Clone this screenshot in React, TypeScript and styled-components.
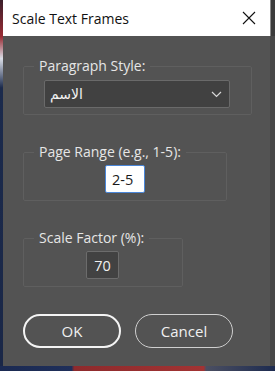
import React from 'react'
import styled, { createGlobalStyle } from 'styled-components'

const Global = createGlobalStyle`
  html, body {
    margin: 0;
    padding: 0;
    width: 275px;
    height: 371px;
    overflow: hidden;
    background: #16223f;
  }
  * {
    box-sizing: border-box;
  }
`

const Backdrop = styled.div`
  width: 275px;
  height: 371px;
  display: flex;
  flex-direction: column;
  font-family: 'Open Sans', 'Noto Sans', sans-serif;
`

const Main = styled.div`
  display: flex;
  height: 366px;
`

const LeftEdge = styled.div`
  width: 3px;
  background: linear-gradient(
    180deg,
    #3a1f2a 0%,
    #9a2c34 10%,
    #d9dde6 16%,
    #1b2a4c 24%,
    #1a2747 100%
  );
`

const RightEdge = styled.div`
  width: 5px;
  display: flex;
  flex-direction: column;
  &::before {
    content: '';
    height: 36px;
    background: #3b3b3b;
    border-left: 1px solid #8a8a8a;
  }
  &::after {
    content: '';
    flex: 1;
    background: #484848;
  }
`

const Dialog = styled.div`
  width: 267px;
  display: flex;
  flex-direction: column;
  background: #535353;
`

const TitleBar = styled.div`
  height: 36px;
  background: #ffffff;
  display: flex;
  align-items: center;
  justify-content: space-between;
  padding: 0 13px 0 9px;
  color: #111;
  font-size: 14px;
`

const CloseButton = styled.button`
  width: 16px;
  height: 16px;
  padding: 0;
  border: 0;
  background: transparent;
  display: flex;
  align-items: center;
  justify-content: center;
`

const Body = styled.div`
  display: flex;
  flex-direction: column;
  padding: 22px 0 0 20px;
`

const Group = styled.fieldset<{ $width: number }>`
  width: ${(p) => p.$width}px;
  height: 57px;
  margin: 0 0 29px;
  padding: 0;
  border: 1px solid #5f5f5f;
  border-radius: 2px;
  display: flex;
  flex-direction: column;
`

const Legend = styled.legend`
  margin-left: 10px;
  padding: 0 5px;
  color: #e6e6e6;
  font-size: 14px;
  line-height: 16px;
`

const Select = styled.div`
  width: 186px;
  height: 28px;
  margin: 6px 0 0 20px;
  background: #414141;
  border: 1px solid #6a6a6a;
  border-radius: 2px;
  display: flex;
  align-items: center;
  justify-content: space-between;
  padding: 0 7px 0 5px;
  color: #f2f2f2;
  font-family: 'DejaVu Sans', 'Noto Sans', sans-serif;
  font-size: 14px;
`

const Field = styled.div<{ $light?: boolean; $width: number; $offset: number }>`
  width: ${(p) => p.$width}px;
  height: 28px;
  margin: 5px 0 0 ${(p) => p.$offset}px;
  display: flex;
  align-items: center;
  justify-content: ${(p) => (p.$light ? 'flex-start' : 'center')};
  padding-left: ${(p) => (p.$light ? '6px' : '0')};
  font-size: 14.5px;
  background: ${(p) => (p.$light ? '#ffffff' : '#424242')};
  color: ${(p) => (p.$light ? '#1a1a1a' : '#f0f0f0')};
  border: 1px solid ${(p) => (p.$light ? '#4a86d8' : '#6c6c6c')};
  border-radius: 2px;
`

const Buttons = styled.div`
  display: flex;
  gap: 14px;
  margin-top: -2px;
`

const Button = styled.button<{ $primary?: boolean }>`
  width: 98px;
  height: 34px;
  border-radius: 17px;
  background: transparent;
  border: ${(p) => (p.$primary ? '2px solid #f4f4f4' : '1px solid #cfcfcf')};
  color: #f0f0f0;
  font-family: 'Open Sans', 'Noto Sans', sans-serif;
  font-size: 15px;
  padding: 0;
`

const BottomEdge = styled.div`
  flex: 1;
  background: linear-gradient(
    90deg,
    #1b2a52 0%,
    #1f2f5a 26%,
    #8e2a2c 27%,
    #a23333 74%,
    #4b4f62 75%,
    #1d2b50 100%
  );
`

export default function App() {
  return (
    <Backdrop>
      <Global />
      <Main>
        <LeftEdge />
        <Dialog>
          <TitleBar>
            <span>Scale Text Frames</span>
            <CloseButton aria-label="Close">
              <svg width="14" height="14" viewBox="0 0 14 14">
                <path d="M1 1 L13 13 M13 1 L1 13" stroke="#111" strokeWidth="1.1" />
              </svg>
            </CloseButton>
          </TitleBar>
          <Body>
            <Group $width={229}>
              <Legend>Paragraph Style:</Legend>
              <Select>
                <span dir="rtl">الاسم</span>
                <svg width="11" height="7" viewBox="0 0 11 7">
                  <path d="M1 1 L5.5 5.5 L10 1" fill="none" stroke="#d8d8d8" strokeWidth="1.2" />
                </svg>
              </Select>
            </Group>
            <Group $width={204}>
              <Legend>Page Range (e.g., 1-5):</Legend>
              <Field $light $width={40} $offset={81}>
                2-5
              </Field>
            </Group>
            <Group $width={160}>
              <Legend>Scale Factor (%):</Legend>
              <Field $width={33} $offset={62}>
                70
              </Field>
            </Group>
            <Buttons>
              <Button $primary>OK</Button>
              <Button>Cancel</Button>
            </Buttons>
          </Body>
        </Dialog>
        <RightEdge />
      </Main>
      <BottomEdge />
    </Backdrop>
  )
}
